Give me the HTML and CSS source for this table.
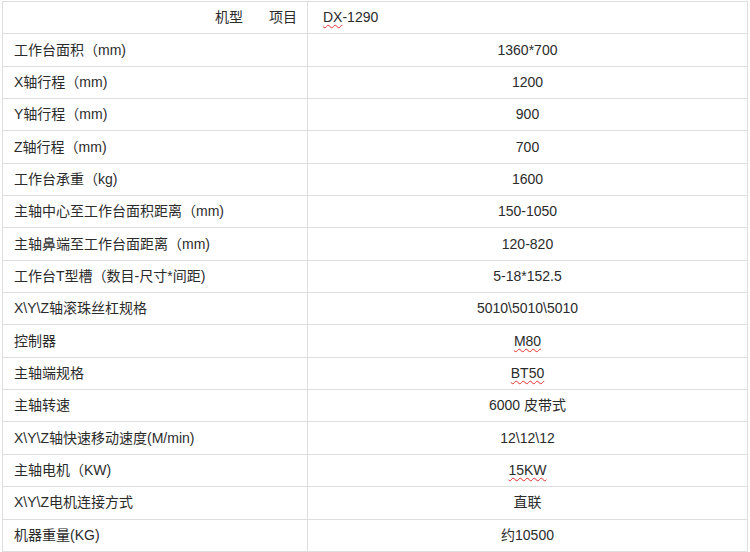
FILE: index.html
```html
<!DOCTYPE html>
<html lang="zh">
<head>
<meta charset="utf-8">
<link rel="stylesheet" href="styles.css">
</head>
<body>
<div class="page">
<table class="spec">
  <tr class="head">
    <td class="label head-label"><span>机型</span><span class="gap"></span><span>项目</span></td>
    <td class="value head-value"><span class="spell">DX</span>-1290</td>
  </tr>
  <tr><td class="label">工作台面积（mm)</td><td class="value">1360*700</td></tr>
  <tr><td class="label">X轴行程（mm)</td><td class="value">1200</td></tr>
  <tr><td class="label">Y轴行程（mm)</td><td class="value">900</td></tr>
  <tr><td class="label">Z轴行程（mm)</td><td class="value">700</td></tr>
  <tr><td class="label">工作台承重（kg)</td><td class="value">1600</td></tr>
  <tr><td class="label">主轴中心至工作台面积距离（mm)</td><td class="value">150-1050</td></tr>
  <tr><td class="label">主轴鼻端至工作台面距离（mm)</td><td class="value">120-820</td></tr>
  <tr><td class="label">工作台T型槽（数目-尺寸*间距)</td><td class="value">5-18*152.5</td></tr>
  <tr><td class="label">X\Y\Z轴滚珠丝杠规格</td><td class="value">5010\5010\5010</td></tr>
  <tr><td class="label">控制器</td><td class="value"><span class="spell">M80</span></td></tr>
  <tr><td class="label">主轴端规格</td><td class="value"><span class="spell">BT50</span></td></tr>
  <tr><td class="label">主轴转速</td><td class="value">6000 皮带式</td></tr>
  <tr><td class="label">X\Y\Z轴快速移动速度(M/min)</td><td class="value">12\12\12</td></tr>
  <tr><td class="label">主轴电机（KW)</td><td class="value"><span class="spell">15KW</span></td></tr>
  <tr><td class="label">X\Y\Z电机连接方式</td><td class="value">直联</td></tr>
  <tr><td class="label">机器重量(KG)</td><td class="value">约10500</td></tr>
</table>
<div class="bottom-bar"></div>
</div>
</body>
</html>
```

FILE: styles.css
```css
html, body {
  margin: 0;
  padding: 0;
  background: #fff;
}
.page {
  width: 750px;
  height: 552px;
  overflow: hidden;
  display: flex;
  flex-direction: column;
}
.spec {
  border-collapse: collapse;
  margin: 1px 0 0 2px;
  width: 746px;
  table-layout: fixed;
  font-family: "Liberation Sans", Arial, "Noto Sans CJK SC", sans-serif;
  font-size: 14px;
  color: #2b2b2b;
}
.spec td {
  border: 1px solid #dedede;
  height: 30.35px;
  padding: 0 0 1px 0;
  line-height: 18px;
}
.label {
  width: 283px;
  padding-left: 11px !important;
  text-align: left;
  white-space: nowrap;
}
.value {
  text-align: center;
}
.head-label {
  text-align: right !important;
  padding-right: 10px !important;
}
.gap {
  display: inline-block;
  width: 26px;
}
.head-value {
  text-align: left;
  padding-left: 15px !important;
}
.spell {
  text-decoration: underline wavy #e03030;
  text-decoration-thickness: 1px;
  text-underline-offset: 2px;
}
.bottom-bar {
  margin-top: auto;
  height: 2px;
  background: linear-gradient(to right, #333 0%, #444 90%, #bbb 100%);
}
```
